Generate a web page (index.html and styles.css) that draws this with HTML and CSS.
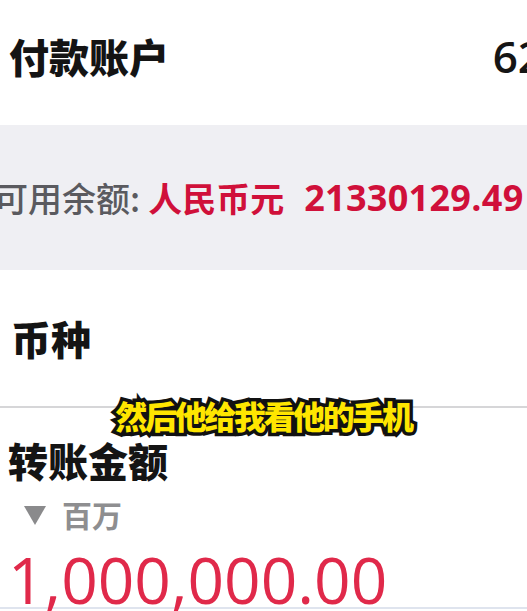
FILE: index.html
```html
<!DOCTYPE html>
<html lang="zh-CN">
<head>
<meta charset="utf-8">
<link rel="stylesheet" href="styles.css">
</head>
<body>
<div class="page">
  <div class="row-account">
    <span class="label">付款账户</span>
    <span class="acct-no">62</span>
  </div>
  <div class="balance">
    <span class="bal-label">可用余额:</span>
    <span class="bal-cur">人民币元</span>
    <span class="bal-num">21330129.49</span>
  </div>
  <div class="row-currency">
    <span class="label">币种</span>
  </div>
  <div class="divider"></div>
  <div class="row-amount">
    <div class="label">转账金额</div>
    <div class="unit"><span class="tri"></span><span class="unit-text">百万</span></div>
    <div class="amount">1,000,000.00</div>
  </div>
  <div class="subtitle">然后他给我看他的手机</div>
</div>
</body>
</html>
```
FILE: styles.css
```css
html, body {
  margin: 0;
  padding: 0;
  background: #ffffff;
}
.page {
  position: relative;
  width: 527px;
  height: 611px;
  overflow: hidden;
  font-family: "Noto Sans", "Noto Sans CJK SC", sans-serif;
  color: #111;
}
.label {
  font-family: "Noto Sans CJK SC", sans-serif;
  font-weight: 900;
  font-size: 40px;
  line-height: 44px;
  color: #141414;
}
.row-account {
  height: 125px;
  box-sizing: border-box;
  padding: 34px 0 0 9px;
  display: flex;
  justify-content: space-between;
  white-space: nowrap;
}
.acct-no {
  font-family: "Open Sans", "Noto Sans", sans-serif;
  font-weight: 600;
  font-size: 44px;
  line-height: 44px;
  margin-right: -16px;
  color: #151515;
}
.balance {
  height: 145px;
  background: #efeff3;
  display: flex;
  align-items: center;
  white-space: nowrap;
  font-size: 34px;
  line-height: 40px;
}
.bal-label {
  font-family: "Noto Sans CJK SC", sans-serif;
  font-weight: 500;
  color: #5a5a5f;
  margin-left: -6px;
}
.bal-cur {
  font-family: "Noto Sans CJK SC", sans-serif;
  font-weight: 700;
  color: #d0103a;
  margin-left: 8px;
}
.bal-num {
  font-family: "Open Sans", "Noto Sans", sans-serif;
  font-weight: 700;
  font-size: 36px;
  letter-spacing: 0.3px;
  color: #d0103a;
  margin-left: 20px;
}
.row-currency {
  height: 136px;
  box-sizing: border-box;
  padding: 46px 0 0 11px;
}
.divider {
  height: 2px;
  background: #d6d6d8;
}
.row-amount {
  padding: 30px 0 0 8px;
  height: 201px;
  box-sizing: border-box;
  border-bottom: 2px solid #dfe4ee;
}
.unit {
  display: flex;
  align-items: center;
  margin-top: 14px;
  margin-left: 16px;
  height: 36px;
}
.tri {
  width: 0;
  height: 0;
  border-left: 11px solid transparent;
  border-right: 11px solid transparent;
  border-top: 19px solid #8a8a8c;
  margin-top: 2px;
}
.unit-text {
  font-family: "Noto Sans CJK SC", sans-serif;
  font-weight: 700;
  font-size: 30px;
  line-height: 36px;
  color: #8e8e90;
  margin-left: 16px;
}
.amount {
  font-family: "Open Sans", "Noto Sans", sans-serif;
  font-weight: 500;
  font-size: 64px;
  line-height: 64px;
  color: #e0294a;
  margin-top: 16px;
  white-space: nowrap;
}
.subtitle {
  position: absolute;
  left: 0;
  right: 0;
  top: 392px;
  text-align: center;
  font-family: "Noto Sans CJK SC", sans-serif;
  font-weight: 900;
  font-size: 32px;
  line-height: 46px;
  letter-spacing: -2.4px;
  color: #ffe600;
  -webkit-text-stroke: 7px #111;
  paint-order: stroke fill;
  text-shadow: 1px 2px 0 #111;
}
```
